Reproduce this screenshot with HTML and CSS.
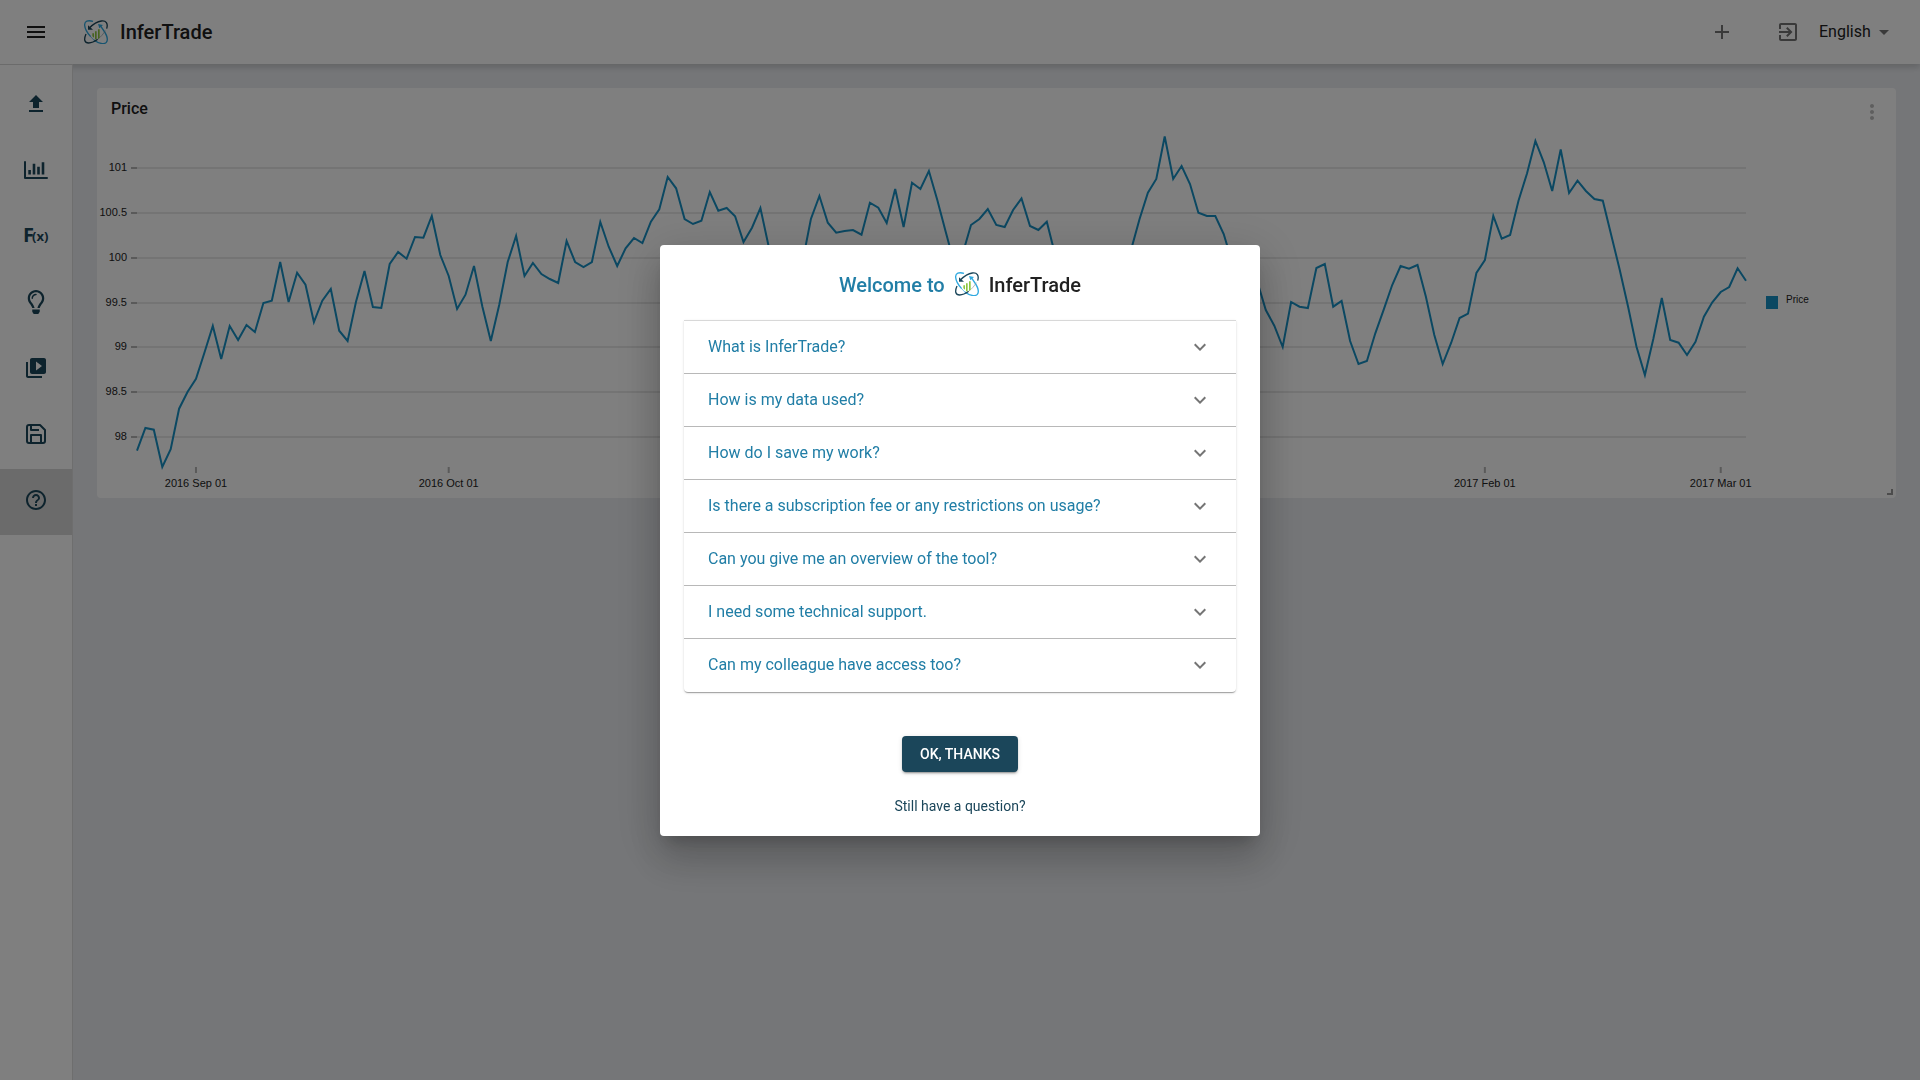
FILE: index.html
```html
<!DOCTYPE html>
<html lang="en">
<head>
<meta charset="utf-8">
<meta name="viewport" content="width=device-width, initial-scale=1">
<title>InferTrade</title>
<link rel="stylesheet" href="styles.css">
</head>
<body>
<svg class="defs" aria-hidden="true">
  <symbol id="logo" viewBox="0 0 72 72">
    <g fill="none" stroke-width="4">
      <path stroke="#2fa9e0" d="M27 4C12 0 1 3 2 16c1 12 8 23 18 34"/>
      <path stroke="#2fa9e0" stroke-width="2" d="M20 50c3 4 6 7 10 10"/>
      <path stroke="#2fa9e0" d="M30 60c14 11 31 14 37 7 6-8 1-23-9-37L49 17"/>
      <path stroke="#1b465a" d="M68 26C73 10 66 1 52 3 38 5 26 14 16 24"/>
      <path stroke="#1b465a" d="M6 42C-1 58 1 69 14 69c9 0 19-5 27-11"/>
      <path stroke="#8a9ba5" stroke-width="2" d="M41 58c9-7 17-16 23-26"/>
    </g>
    <path fill="#1b465a" d="M12 16v13h15z"/>
    <path fill="#2fa9e0" d="M42 12l15 3-11 10z"/>
    <path fill="#8cc63f" d="M25 40h5v13l-5-4zM33 34h5v24h-5zM42 28h5v25l-5 4z"/>
  </symbol>
  <symbol id="chevron" viewBox="0 0 24 24"><path d="M16.59 8.59L12 13.17 7.41 8.59 6 10l6 6 6-6z"/></symbol>
</svg>

<div class="app">
  <header class="topbar">
    <button class="icon-button menu" aria-label="Menu"><svg class="icon" viewBox="0 0 24 24"><path d="M3 18h18v-2H3v2zm0-5h18v-2H3v2zm0-7v2h18V6H3z"/></svg></button>
    <a class="brand" href="#"><svg class="icon"><use href="#logo"/></svg><span>InferTrade</span></a>
    <div class="actions">
      <button class="icon-button" aria-label="Add"><svg class="icon" viewBox="0 0 24 24"><path d="M19 13h-6v6h-2v-6H5v-2h6V5h2v6h6v2z"/></svg></button>
      <button class="icon-button" aria-label="Sign in"><svg class="icon" viewBox="0 0 24 24"><path d="M10.09 15.59L11.5 17l5-5-5-5-1.41 1.41L12.67 11H3v2h9.67l-2.58 2.59zM19 3H5c-1.11 0-2 .9-2 2v4h2V5h14v14H5v-4H3v4c0 1.1.89 2 2 2h14c1.1 0 2-.9 2-2V5c0-1.1-.9-2-2-2z"/></svg></button>
      <label class="language">
        <select aria-label="Language"><option>English</option></select>
        <svg class="icon" viewBox="0 0 24 24"><path d="M7 10l5 5 5-5z"/></svg>
      </label>
    </div>
  </header>

  <div class="body">
    <nav class="sidebar" aria-label="Tools">
      <button class="nav-item" aria-label="Upload"><svg class="icon" viewBox="0 0 24 24"><path d="M9 16h6v-6h4l-7-7-7 7h4v6zm-4 2h14v2H5z"/></svg></button>
      <button class="nav-item" aria-label="Charts"><svg class="icon" viewBox="0 0 24 24"><path fill="none" stroke="currentColor" stroke-width="2" stroke-linecap="round" stroke-linejoin="round" d="M1 4v16h22"/><path d="M4.300 12h2.600v4.500H4.300zM8.700 5.700h2.600v10.800H8.700zM13.200 8.700h2.600v7.800h-2.600zM17.700 4.300h2.600v12.200h-2.600z"/></svg></button>
      <button class="nav-item" aria-label="Functions"><svg class="icon formula" viewBox="0 0 24 24"><text x="-1" y="18" font-size="20">F</text><text x="8" y="17" font-size="13">(x)</text></svg></button>
      <button class="nav-item" aria-label="Ideas"><svg class="icon" viewBox="0 0 352 512"><path d="M176 80c-52.94 0-96 43.06-96 96 0 8.84 7.16 16 16 16s16-7.16 16-16c0-35.3 28.72-64 64-64 8.84 0 16-7.16 16-16s-7.16-16-16-16zM96.060 459.170c0 3.150.930 6.220 2.680 8.840l24.510 36.840c2.970 4.460 7.970 7.140 13.320 7.140h78.850c5.360 0 10.360-2.680 13.320-7.140l24.510-36.840c1.740-2.620 2.670-5.700 2.680-8.840l.050-43.180H96.020l.040 43.180zM176 0C73.720 0 0 82.970 0 176c0 44.370 16.450 84.850 43.560 115.780 16.640 18.990 42.740 58.800 52.420 92.160v.060h48v-.120c-.010-4.770-.720-9.510-2.150-14.070-5.590-17.810-22.820-64.770-62.170-109.670-20.540-23.430-31.520-53.150-31.610-84.140-.200-73.640 59.670-128 127.950-128 70.580 0 128 57.420 128 128 0 30.970-11.240 60.850-31.650 84.140-39.110 44.610-56.420 91.470-62.100 109.460a47.507 47.507 0 0 0-2.220 14.300v.100h48v-.050c9.680-33.370 35.780-73.180 52.420-92.160C335.550 260.850 352 220.370 352 176 352 78.800 273.200 0 176 0z"/></svg></button>
      <button class="nav-item" aria-label="Tutorials"><svg class="icon" viewBox="0 0 24 24"><path d="M4 6H2v14c0 1.1.9 2 2 2h14v-2H4V6zm16-4H8c-1.100 0-2 .900-2 2v12c0 1.100.900 2 2 2h12c1.100 0 2-.900 2-2V4c0-1.100-.900-2-2-2zm-8 12.500v-9l6 4.500-6 4.500z"/></svg></button>
      <button class="nav-item" aria-label="Save"><svg class="icon" viewBox="0 0 24 24"><path fill="none" stroke="currentColor" stroke-width="2" stroke-linejoin="round" d="M5 3h11l5 5v11a2 2 0 0 1-2 2H5a2 2 0 0 1-2-2V5a2 2 0 0 1 2-2zM7 3v5h8M7 21v-8h10v8"/></svg></button>
      <button class="nav-item selected" aria-label="Help"><svg class="icon" viewBox="0 0 24 24"><path d="M11 18h2v-2h-2v2zm1-16C6.480 2 2 6.480 2 12s4.480 10 10 10 10-4.480 10-10S17.520 2 12 2zm0 18c-4.410 0-8-3.590-8-8s3.590-8 8-8 8 3.590 8 8-3.590 8-8 8zm0-14c-2.210 0-4 1.790-4 4h2c0-1.100.900-2 2-2s2 .900 2 2c0 2-3 1.750-3 5h2c0-2.250 3-2.500 3-5 0-2.210-1.790-4-4-4z"/></svg></button>
    </nav>

    <main class="content">
      <section class="card">
        <div class="card-head">
          <h2>Price</h2>
          <button class="icon-button more" aria-label="Chart options"><svg class="icon" viewBox="0 0 24 24"><path d="M12 8c1.100 0 2-.900 2-2s-.900-2-2-2-2 .900-2 2 .900 2 2 2zm0 2c-1.100 0-2 .900-2 2s.900 2 2 2 2-.900 2-2-.900-2-2-2zm0 6c-1.100 0-2 .900-2 2s.900 2 2 2 2-.900 2-2-.900-2-2-2z"/></svg></button>
        </div>
        <svg class="chart" id="chart" role="img" aria-label="Price by day"></svg>
        <span class="resize-handle"></span>
      </section>
    </main>
  </div>
</div>

<div class="backdrop">
  <div class="dialog" role="dialog" aria-modal="true" aria-labelledby="dialog-title">
    <h1 class="dialog-title" id="dialog-title"><span class="welcome">Welcome to</span><svg class="icon"><use href="#logo"/></svg><span>InferTrade</span></h1>
    <div class="accordion">
      <button class="question" aria-expanded="false"><span>What is InferTrade?</span><svg class="icon"><use href="#chevron"/></svg></button>
      <button class="question" aria-expanded="false"><span>How is my data used?</span><svg class="icon"><use href="#chevron"/></svg></button>
      <button class="question" aria-expanded="false"><span>How do I save my work?</span><svg class="icon"><use href="#chevron"/></svg></button>
      <button class="question" aria-expanded="false"><span>Is there a subscription fee or any restrictions on usage?</span><svg class="icon"><use href="#chevron"/></svg></button>
      <button class="question" aria-expanded="false"><span>Can you give me an overview of the tool?</span><svg class="icon"><use href="#chevron"/></svg></button>
      <button class="question" aria-expanded="false"><span>I need some technical support.</span><svg class="icon"><use href="#chevron"/></svg></button>
      <button class="question" aria-expanded="false"><span>Can my colleague have access too?</span><svg class="icon"><use href="#chevron"/></svg></button>
    </div>
    <button class="confirm">OK, THANKS</button>
    <a class="contact" href="#">Still have a question?</a>
  </div>
</div>
<script src="chart.js"></script>
</body>
</html>
```
FILE: styles.css
```css
* { box-sizing: border-box; }

body {
  margin: 0;
  font-family: Roboto, "Liberation Sans", sans-serif;
  font-size: 16px;
  line-height: 24px;
  color: #212121;
}

h1, h2 { margin: 0; font-weight: 500; }
a { color: inherit; text-decoration: none; }

button {
  margin: 0;
  padding: 0;
  border: 0;
  background: none;
  font: inherit;
  color: inherit;
  cursor: pointer;
}

.defs { position: absolute; width: 0; height: 0; }

.icon {
  display: block;
  flex: none;
  width: 24px;
  height: 24px;
  fill: currentColor;
}

.app {
  display: flex;
  flex-direction: column;
  min-height: 100vh;
  background: #ebedf1;
}

.topbar {
  position: relative;
  z-index: 1;
  display: flex;
  align-items: center;
  height: 64px;
  padding: 0 24px;
  background: #fff;
  box-shadow: 0 4px 5px rgba(0, 0, 0, .08), 0 1px 10px rgba(0, 0, 0, .12);
}

.brand {
  display: flex;
  align-items: center;
  gap: 12px;
  margin-left: 36px;
  font-size: 20px;
  font-weight: 500;
}

.actions {
  display: flex;
  align-items: center;
  margin-left: auto;
  color: #757575;
}

.actions .icon-button + .icon-button { margin-left: 42px; }

.language {
  display: flex;
  align-items: center;
  gap: 1px;
  margin-left: 19px;
}

.language select {
  appearance: none;
  padding: 0;
  border: 0;
  background: none;
  font: inherit;
  color: #212121;
}

.body { display: flex; flex: 1; }

.sidebar {
  position: relative;
  z-index: 2;
  flex: none;
  width: 73px;
  padding-top: 8px;
  border-top: 1px solid #d6d6d6;
  border-right: 1px solid #dcdcdc;
  background: #fff;
  color: #1b465a;
}

.nav-item {
  display: flex;
  justify-content: center;
  width: 100%;
  padding: 19px 0 23px;
}

.nav-item.selected { background: #d6d6d6; }

.formula {
  overflow: visible;
  font-family: "Noto Sans", sans-serif;
  font-weight: 700;
}

.content { flex: 1; min-width: 0; padding: 24px; }

.card {
  position: relative;
  height: 410px;
  border-radius: 4px;
  background: #fff;
}

.card-head {
  display: flex;
  align-items: flex-start;
  justify-content: space-between;
  height: 40px;
  padding: 9px 12px 0 14px;
}

.card-head h2 { font-size: 16px; }
.more { padding-top: 3px; color: #bdbdbd; }

.chart {
  display: block;
  width: 100%;
  height: 370px;
  font-family: "Liberation Sans", Arial, sans-serif;
  font-size: 11px;
  fill: #222;
}

.chart .grid { stroke: #e8e8e8; stroke-width: 2; }
.chart .tick { stroke: #b4b4b4; stroke-width: 2; }
.chart .series { fill: none; stroke: #1790c4; stroke-width: 2; }
.chart .swatch { fill: #1790c4; }
.chart .legend { font-size: 10px; }

.resize-handle {
  position: absolute;
  right: 3px;
  bottom: 3px;
  width: 6px;
  height: 6px;
  border-right: 2px solid #999;
  border-bottom: 2px solid #999;
}

.backdrop {
  position: fixed;
  inset: 0;
  z-index: 10;
  display: flex;
  align-items: center;
  justify-content: center;
  background: rgba(0, 0, 0, .5);
}

.dialog {
  display: flex;
  flex-direction: column;
  align-items: center;
  width: 600px;
  max-width: calc(100% - 64px);
  padding: 24px 24px 18px;
  border-radius: 4px;
  background: #fff;
  box-shadow: 0 11px 15px -7px rgba(0, 0, 0, .2), 0 24px 38px 3px rgba(0, 0, 0, .14), 0 9px 46px 8px rgba(0, 0, 0, .12);
}

.dialog-title {
  display: flex;
  align-items: center;
  gap: 10px;
  font-size: 20px;
  line-height: 32px;
}

.dialog-title .icon { margin-bottom: 2px; }
.dialog-title .welcome { color: #217ea6; }

.accordion {
  align-self: stretch;
  margin: 19px 0 44px;
  border-top: 1px solid #d8d8d8;
  border-radius: 0 0 4px 4px;
  box-shadow: 0 2px 1px -1px rgba(0, 0, 0, .2), 0 1px 1px rgba(0, 0, 0, .14), 0 1px 3px rgba(0, 0, 0, .12);
}

.question {
  display: flex;
  align-items: center;
  justify-content: space-between;
  width: 100%;
  height: 53px;
  padding: 0 24px;
  border-bottom: 1px solid #b8b8b8;
  color: #217ea6;
  text-align: left;
}

.question:last-child { border-bottom-color: transparent; }
.question .icon { color: #757575; }

.confirm {
  min-width: 116px;
  padding: 6px 16px;
  border-radius: 4px;
  background: #1b465a;
  box-shadow: 0 3px 1px -2px rgba(0, 0, 0, .2), 0 2px 2px rgba(0, 0, 0, .14), 0 1px 5px rgba(0, 0, 0, .12);
  color: #fff;
  font-size: 14px;
  font-weight: 500;
}

.contact {
  margin-top: 22px;
  color: #1b465a;
  font-size: 14px;
}
```
FILE: chart.js
```js
// Daily price trace, one sample per day from 25 Aug 2016; a smaller sample is a higher price.
const samples = [
  450.7, 428, 429.7, 467, 449.3, 408.7, 392, 378.7, 352.7, 326, 359, 326, 340, 325, 332, 303,
  300.7, 262, 302, 272.7, 284.7, 322, 300.7, 289, 330.7, 341, 301.7, 271, 307, 308, 264, 252,
  258.7, 237, 237.7, 216, 255, 276, 309, 294.7, 266, 306.7, 341, 305, 262, 236, 276, 263,
  274, 279, 283, 241, 262, 267, 262, 222, 246.7, 266, 248.3, 238, 243, 221.7, 209.3, 177,
  188.3, 219, 224, 220.7, 192, 210.7, 208, 216.3, 242, 227.7, 208, 247, 285, 300, 285, 262,
  219, 196, 222.7, 232.7, 231, 230, 234.7, 202.7, 207.7, 223, 189, 227, 182.7, 189, 171, 200,
  231.7, 263, 254, 225, 219, 209, 225, 227, 210, 198.5, 226, 230, 221.7, 255, 275, 290,
  300, 310, 300, 290, 280, 265, 250, 219.3, 192.7, 179, 136.5, 179, 166, 184, 212.7, 216,
  216, 234, 262, 268, 274, 282, 310, 325.7, 347, 302, 306.7, 308, 268, 264, 306.7, 301,
  341, 364, 361, 333.3, 309.3, 285, 266, 268.7, 265, 296.7, 335, 364, 342.7, 318, 313.7, 273,
  260, 216, 238.7, 235, 200.7, 173.5, 141, 162.3, 191, 149.5, 193, 180.7, 191, 199, 200.7, 235,
  269.3, 306.7, 346.7, 375, 339, 298, 340, 342.7, 355, 341.7, 316.7, 302.3, 292, 287, 268.3, 280.7
];
const priceTicks = [[101, 168], [100.5, 213], [100, 258], [99.5, 303], [99, 347], [98.5, 392], [98, 437]];
const dateTicks = [
  [7, "2016 Sep 01"], [37, "2016 Oct 01"], [68, "2016 Nov 01"], [98, "2016 Dec 01"],
  [129, "2017 Jan 01"], [160, "2017 Feb 01"], [188, "2017 Mar 01"]
];
const margin = { left: 40, right: 150, offset: 128 };

function draw() {
  const svg = document.getElementById("chart");
  const right = svg.getBoundingClientRect().width - margin.right;
  const x = day => margin.left + day * (right - margin.left) / (samples.length - 1);
  const y = sample => sample - margin.offset;
  let out = "";
  for (const [price, s] of priceTicks) {
    out += `<line class="grid" x1="${margin.left}" x2="${right}" y1="${y(s)}" y2="${y(s)}"/>`;
    out += `<line class="tick" x1="${margin.left - 6}" x2="${margin.left}" y1="${y(s)}" y2="${y(s)}"/>`;
    out += `<text x="${margin.left - 10}" y="${y(s) + 3}" text-anchor="end">${price}</text>`;
  }
  for (const [day, label] of dateTicks) {
    out += `<line class="tick" x1="${x(day)}" x2="${x(day)}" y1="339" y2="345"/>`;
    out += `<text x="${x(day)}" y="359" text-anchor="middle">${label}</text>`;
  }
  const points = samples.map((s, day) => `${x(day).toFixed(1)},${y(s).toFixed(1)}`).join(" ");
  out += `<polyline class="series" points="${points}"/>`;
  out += `<rect class="swatch" x="${right + 20}" y="168" width="12" height="13"/>`;
  out += `<text class="legend" x="${right + 40}" y="175">Price</text>`;
  svg.innerHTML = out;
}

draw();
window.addEventListener("resize", draw);
```
